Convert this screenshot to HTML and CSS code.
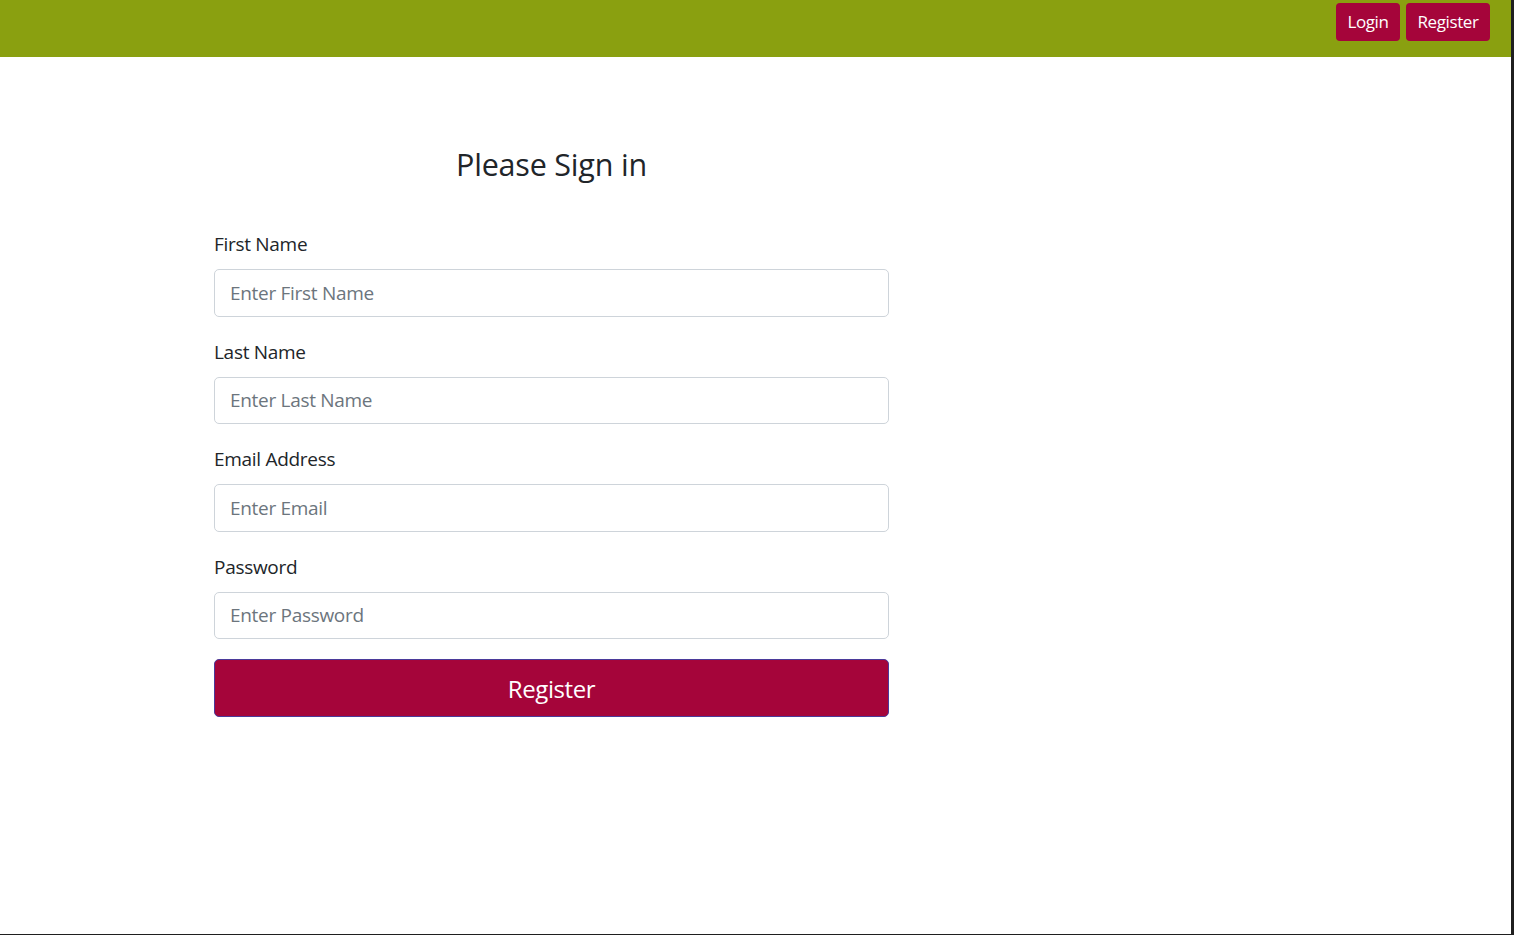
FILE: index.html
```html
<!DOCTYPE html>
<html lang="en">
<head>
<meta charset="utf-8">
<title>Register</title>
<link rel="stylesheet" href="styles.css">
</head>
<body>
<div class="page">
  <header class="topbar">
    <nav class="topnav">
      <a class="btn-top" href="#">Login</a>
      <a class="btn-top" href="#">Register</a>
    </nav>
  </header>
  <main class="content">
    <form class="signin">
      <h2 class="title">Please Sign in</h2>
      <div class="group">
        <label class="lbl">First Name</label>
        <input class="field" type="text" placeholder="Enter First Name">
      </div>
      <div class="group">
        <label class="lbl">Last Name</label>
        <input class="field" type="text" placeholder="Enter Last Name">
      </div>
      <div class="group">
        <label class="lbl">Email Address</label>
        <input class="field" type="email" placeholder="Enter Email">
      </div>
      <div class="group">
        <label class="lbl">Password</label>
        <input class="field" type="password" placeholder="Enter Password">
      </div>
      <button class="submit" type="button">Register</button>
    </form>
  </main>
</div>
</body>
</html>
```

FILE: styles.css
```css
html, body {
  margin: 0;
  padding: 0;
  height: 100%;
}
body {
  background: #1f1f1f;
  font-family: "Open Sans", "Noto Sans", sans-serif;
  color: #212529;
  display: flex;
  flex-direction: column;
  align-items: flex-start;
}
.page {
  width: 1511px;
  height: 934px;
  background: #ffffff;
  display: flex;
  flex-direction: column;
}
.topbar {
  height: 57px;
  background: #8aa010;
  display: flex;
  justify-content: flex-end;
  align-items: flex-start;
  padding-right: 21px;
  box-sizing: border-box;
}
.topnav {
  display: flex;
  gap: 6px;
  margin-top: 3px;
}
.btn-top {
  height: 38px;
  box-sizing: border-box;
  padding: 0 11.5px;
  background: #a5053a;
  color: #ffffff;
  border-radius: 4px;
  font-size: 17px;
  line-height: 38px;
  text-decoration: none;
  letter-spacing: -0.4px;
}
.content {
  padding-left: 214px;
}
.signin {
  width: 675px;
  display: flex;
  flex-direction: column;
}
.title {
  margin: 89px 0 47px;
  text-align: center;
  font-size: 30.5px;
  line-height: 36px;
  font-weight: 400;
  color: #212529;
  letter-spacing: -0.2px;
}
.group {
  display: flex;
  flex-direction: column;
  margin-bottom: 20px;
}
.lbl {
  font-size: 19px;
  line-height: 30px;
  margin-bottom: 10px;
  letter-spacing: -0.3px;
}
.field {
  height: 47.5px;
  box-sizing: border-box;
  border: 1px solid #ced4da;
  border-radius: 5px;
  padding: 0 15px;
  font-family: inherit;
  font-size: 19px;
  color: #495057;
  letter-spacing: -0.3px;
}
.field::placeholder {
  color: #6c757d;
}
.submit {
  height: 58px;
  background: #a5053a;
  border: 1px solid #4b3a9a;
  border-radius: 5px;
  color: #ffffff;
  font-family: inherit;
  font-size: 24px;
  letter-spacing: -0.4px;
  cursor: pointer;
}
```
